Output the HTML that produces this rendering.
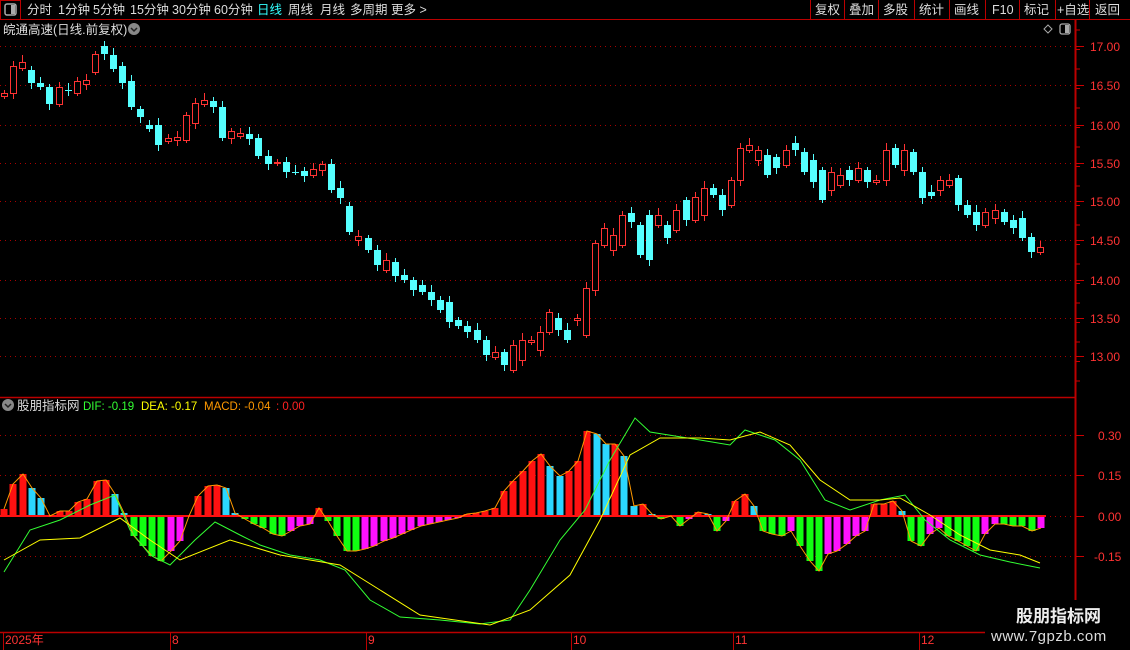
<!DOCTYPE html>
<html><head><meta charset="utf-8"><style>
body{margin:0;background:#000;width:1130px;height:650px;overflow:hidden;font-family:"Liberation Sans","Noto Sans CJK SC",sans-serif;}
svg{position:absolute;left:0;top:0}
</style></head><body>
<svg id="s" width="1130" height="650" xmlns="http://www.w3.org/2000/svg" font-family="Liberation Sans, Noto Sans CJK SC, sans-serif">
<rect width="1130" height="650" fill="#000"/>
<!-- top bar -->
<line x1="0" y1="19.5" x2="1130" y2="19.5" stroke="#b00" />
<rect x="0.5" y="0.5" width="20" height="19" fill="none" stroke="#b00"/>
<rect x="5" y="4" width="11" height="11" rx="2" fill="none" stroke="#aaa" stroke-width="1.5"/><rect x="11" y="5" width="4" height="9" fill="#aaa"/>
<g font-size="12.5" fill="#ddd">
<text x="27" y="14">分时</text><text x="58" y="14">1分钟</text><text x="93" y="14">5分钟</text><text x="130" y="14">15分钟</text><text x="172" y="14">30分钟</text><text x="214" y="14">60分钟</text>
<text x="257" y="14" fill="#3ff">日线</text><text x="288" y="14">周线</text><text x="320" y="14">月线</text><text x="350" y="14">多周期</text><text x="391" y="14">更多 &gt;</text>
</g>
<g stroke="#b00"><line x1="810.5" y1="0" x2="810.5" y2="19"/><line x1="844.5" y1="0" x2="844.5" y2="19"/><line x1="878.5" y1="0" x2="878.5" y2="19"/><line x1="914.5" y1="0" x2="914.5" y2="19"/><line x1="949.5" y1="0" x2="949.5" y2="19"/><line x1="985.5" y1="0" x2="985.5" y2="19"/><line x1="1019.5" y1="0" x2="1019.5" y2="19"/><line x1="1055.5" y1="0" x2="1055.5" y2="19"/><line x1="1089.5" y1="0" x2="1089.5" y2="19"/></g>
<g font-size="12.5" fill="#ddd"><text x="815" y="14">复权</text><text x="849" y="14">叠加</text><text x="883" y="14">多股</text><text x="919" y="14">统计</text><text x="954" y="14">画线</text><text x="992" y="14">F10</text><text x="1024" y="14">标记</text><text x="1057" y="14">+自选</text><text x="1095" y="14">返回</text></g>
<text x="3" y="34" font-size="12.5" fill="#ddd">皖通高速(日线.前复权)</text>
<circle cx="134" cy="29" r="6" fill="#888"/><path d="M131 28l3 3 3-3" stroke="#222" fill="none" stroke-width="1.5"/>
<path d="M1048 25l4 4-4 4-4-4z" fill="none" stroke="#aaa"/>
<rect x="1060" y="24" width="10" height="10" rx="2" fill="none" stroke="#aaa" stroke-width="1.3"/><rect x="1065" y="25" width="4" height="8" fill="#aaa"/>
<!-- right axis -->
<line x1="1075.5" y1="20" x2="1075.5" y2="632" stroke="#b00" stroke-width="2"/>
<line x1="0" y1="397.5" x2="1075" y2="397.5" stroke="#b00" stroke-width="1.5"/>
<line x1="0" y1="632.5" x2="985" y2="632.5" stroke="#b00" stroke-width="1.5"/>
<g id="grid"></g>
<g id="candles"></g>
<g id="macd"></g>
<g font-size="12.5" fill="#ddd"><circle cx="8" cy="405" r="6" fill="#888"/><path d="M5 404l3 3 3-3" stroke="#222" fill="none" stroke-width="1.5"/>
<text x="17" y="410">股朋指标网</text></g>
<g font-size="11.5"><text x="83" y="410" fill="#3f3">DIF: -0.19</text><text x="141" y="410" fill="#ff0">DEA: -0.17</text><text x="204" y="410" fill="#f90">MACD: -0.04</text><text x="276" y="410" fill="#f22">: 0.00</text></g>
<g font-size="12" fill="#f33"><text x="5" y="644">2025年</text><text x="172" y="644">8</text><text x="368" y="644">9</text><text x="573" y="644">10</text><text x="735" y="644">11</text><text x="921" y="644">12</text></g>
<g stroke="#b00"><line x1="3.5" y1="633" x2="3.5" y2="650"/><line x1="170.5" y1="633" x2="170.5" y2="650"/><line x1="366.5" y1="633" x2="366.5" y2="650"/><line x1="571.5" y1="633" x2="571.5" y2="650"/><line x1="733.5" y1="633" x2="733.5" y2="650"/><line x1="919.5" y1="633" x2="919.5" y2="650"/></g>
<rect x="985" y="600" width="145" height="50" fill="#000"/>
<text x="1016" y="622" font-size="17" font-weight="bold" fill="#eee">股朋指标网</text>
<text x="991" y="641" font-size="15" fill="#ddd" letter-spacing="0.5">www.7gpzb.com</text>
</svg>
<script>
var NS="http://www.w3.org/2000/svg";
function el(p,t,a){var e=document.createElementNS(NS,t);for(var k in a)e.setAttribute(k,a[k]);p.appendChild(e);return e;}
var s=document.getElementById('s'),g=document.getElementById('grid');
var pl=[[46,"17.00"],[85,"16.50"],[125,"16.00"],[163,"15.50"],[201,"15.00"],[240,"14.50"],[280,"14.00"],[318,"13.50"],[356,"13.00"]];
pl.forEach(function(p){el(g,'line',{x1:0,y1:p[0]+.5,x2:1075,y2:p[0]+.5,stroke:'#a00','stroke-dasharray':'1,4'});el(g,'line',{x1:1076,y1:p[0]+.5,x2:1084,y2:p[0]+.5,stroke:'#c00'});var t=el(g,'text',{x:1090,y:p[0]+5,'font-size':12,fill:'#f33'});t.textContent=p[1];});
for(var y=30;y<395;y+=19.5){el(g,'line',{x1:1076,y1:y,x2:1080,y2:y,stroke:'#c00'});}
var ml=[[435,"0.30"],[475,"0.15"],[516,"0.00"],[556,"-0.15"]];
ml.forEach(function(p){el(g,'line',{x1:0,y1:p[0]+.5,x2:1075,y2:p[0]+.5,stroke:'#a00','stroke-dasharray':'1,4'});el(g,'line',{x1:1076,y1:p[0]+.5,x2:1084,y2:p[0]+.5,stroke:'#c00'});var t=el(g,'text',{x:p[1][0]=='-'?1094:1098,y:p[0]+5,'font-size':12,fill:'#f33'});t.textContent=p[1];});
// candles [type,top,bottom]
var C=[["r",93,96],["r",66,93],["r",62,68],["c",70,83],["c",83,87],["c",87,104],["r",87,104],["x",90,90],["r",81,93],["r",80,84],["r",54,72],["c",46,54],["c",55,69],["c",66,83],["c",81,107],["c",109,117],["c",125,129],["c",125,145],["r",138,141],["r",137,140],["r",115,140],["r",103,123],["r",100,104],["c",101,107],["c",107,138],["r",131,138],["r",133,136],["c",134,139],["c",138,156],["c",156,164],["r",162,163],["c",162,172],["x",172,172],["c",171,176],["r",169,175],["r",164,170],["c",164,190],["c",188,198],["c",206,232],
["r",236,240],["c",238,250],["c",250,265],["r",260,270],["c",262,276],["c",275,280],["c",280,290],["c",285,292],["c",292,300],["c",300,310],["c",302,322],["c",320,326],["c",326,332],["c",330,340],["c",340,355],["r",352,357],["c",352,365],["r",345,370],["r",340,360],["r",340,342],["r",332,350],["r",312,332],["c",318,330],["c",330,340],["r",318,320],["r",288,335],["r",243,290],["r",228,245],["r",235,250],["r",215,245],["c",213,222],["c",225,255],["c",215,260],["r",215,225],["c",225,238],["r",210,230],["c",200,220],["r",197,220],["r",188,215],["c",188,195],["c",195,210],["r",180,205],["r",148,180],["r",145,150],["r",150,160],["c",155,175],["c",157,168],["r",150,165],["c",143,150],["c",152,172],["c",160,182],["c",170,200],["r",172,190],["r",175,185],["c",170,180],["r",168,180],["c",170,182],["r",180,182],["r",150,180],["c",148,165],["r",150,170],["c",152,172],["c",172,198],["c",192,196],["r",180,190],["r",180,185],["c",178,205],["c",205,215],["c",212,225],["r",212,225],["r",210,218],["c",212,222],["c",220,228],["c",218,238],["c",237,252],["r",247,252]];
var cg=document.getElementById('candles');
var sp=(1040-4)/(C.length-1);
C.forEach(function(c,i){var x=Math.round(4+i*sp)+.5;var col=c[0]=='r'?'#f33':'#5ff';var w1=c[1]-3-(i*7%5),w2=c[2]+3+(i*3%6);
el(cg,'line',{x1:x,y1:w1,x2:x,y2:w2,stroke:col});
if(c[0]=='r'){el(cg,'rect',{x:x-3,y:c[1]+.5,width:6,height:Math.max(c[2]-c[1],1),fill:'#000',stroke:col});}
else if(c[0]=='x'){el(cg,'line',{x1:x-3.5,y1:c[1]+.5,x2:x+3.5,y2:c[1]+.5,stroke:'#5ff'});}
else el(cg,'rect',{x:x-3.5,y:c[1],width:7,height:Math.max(c[2]-c[1],1),fill:col});});
// macd histogram
var H=[7,32,42,28,18,0,5,5,14,17,35,36,22,3,-20,-30,-40,-45,-35,-25,0,20,30,31,28,3,-3,-8,-12,-18,-20,-15,-10,-8,8,-5,-20,-35,-35,-33,-30,-25,-22,-18,-14,-10,-8,-6,-4,-2,2,3,5,8,25,35,45,55,62,50,40,45,55,85,82,72,72,60,10,12,2,-3,0,-10,-3,4,2,-15,-5,15,22,10,-15,-18,-20,-15,-30,-45,-55,-38,-35,-28,-20,-15,12,12,15,5,-25,-30,-18,-12,-20,-25,-30,-35,-18,-8,-8,-10,-10,-15,-12];
var mg=document.getElementById('macd');var n=H.length,sp2=(1041-4)/(n-1),pts=[];
H.forEach(function(h,i){var x=Math.round(4+i*sp2);var prev=i?H[i-1]:0;var col;
if(h>=0)col=h>=prev?'#f11':'#2bd7ff';else col=h<=prev?'#1f1':'#f1f';
var y=h>=0?516-h:516;el(mg,'rect',{x:x-3.5,y:y,width:7,height:Math.max(Math.abs(h),1),fill:col});pts.push(x+','+(516-h));});
el(mg,'line',{x1:0,y1:516,x2:1046,y2:516,stroke:'#f11',"stroke-width":2});
el(mg,'polyline',{points:pts.join(' '),fill:'none',stroke:'#f90','stroke-width':1});
function pl2(a,col){el(mg,'polyline',{points:a.map(function(p){return p.join(',')}).join(' '),fill:'none',stroke:col,'stroke-width':1});}
pl2([[4,572],[30,530],[60,520],[90,505],[115,495],[130,530],[150,555],[170,565],[195,540],[215,522],[240,535],[260,545],[290,555],[320,560],[345,570],[370,600],[400,617],[440,620],[480,624],[510,620],[530,590],[560,540],[585,510],[610,460],[635,418],[650,432],[700,440],[730,445],[745,430],[775,440],[800,460],[825,500],[850,510],[880,500],[905,495],[925,520],[950,540],[980,555],[1010,562],[1040,568]],'#3f3');
pl2([[4,560],[40,540],[80,538],[120,518],[150,540],[180,560],[230,540],[280,555],[340,565],[380,590],[420,615],[490,625],[530,610],[570,575],[600,520],[630,455],[660,438],[700,438],[730,440],[760,432],[790,445],[820,480],[850,500],[880,500],[900,498],[930,515],[960,535],[990,550],[1020,555],[1040,563]],'#ff0');
</script>
</body></html>
